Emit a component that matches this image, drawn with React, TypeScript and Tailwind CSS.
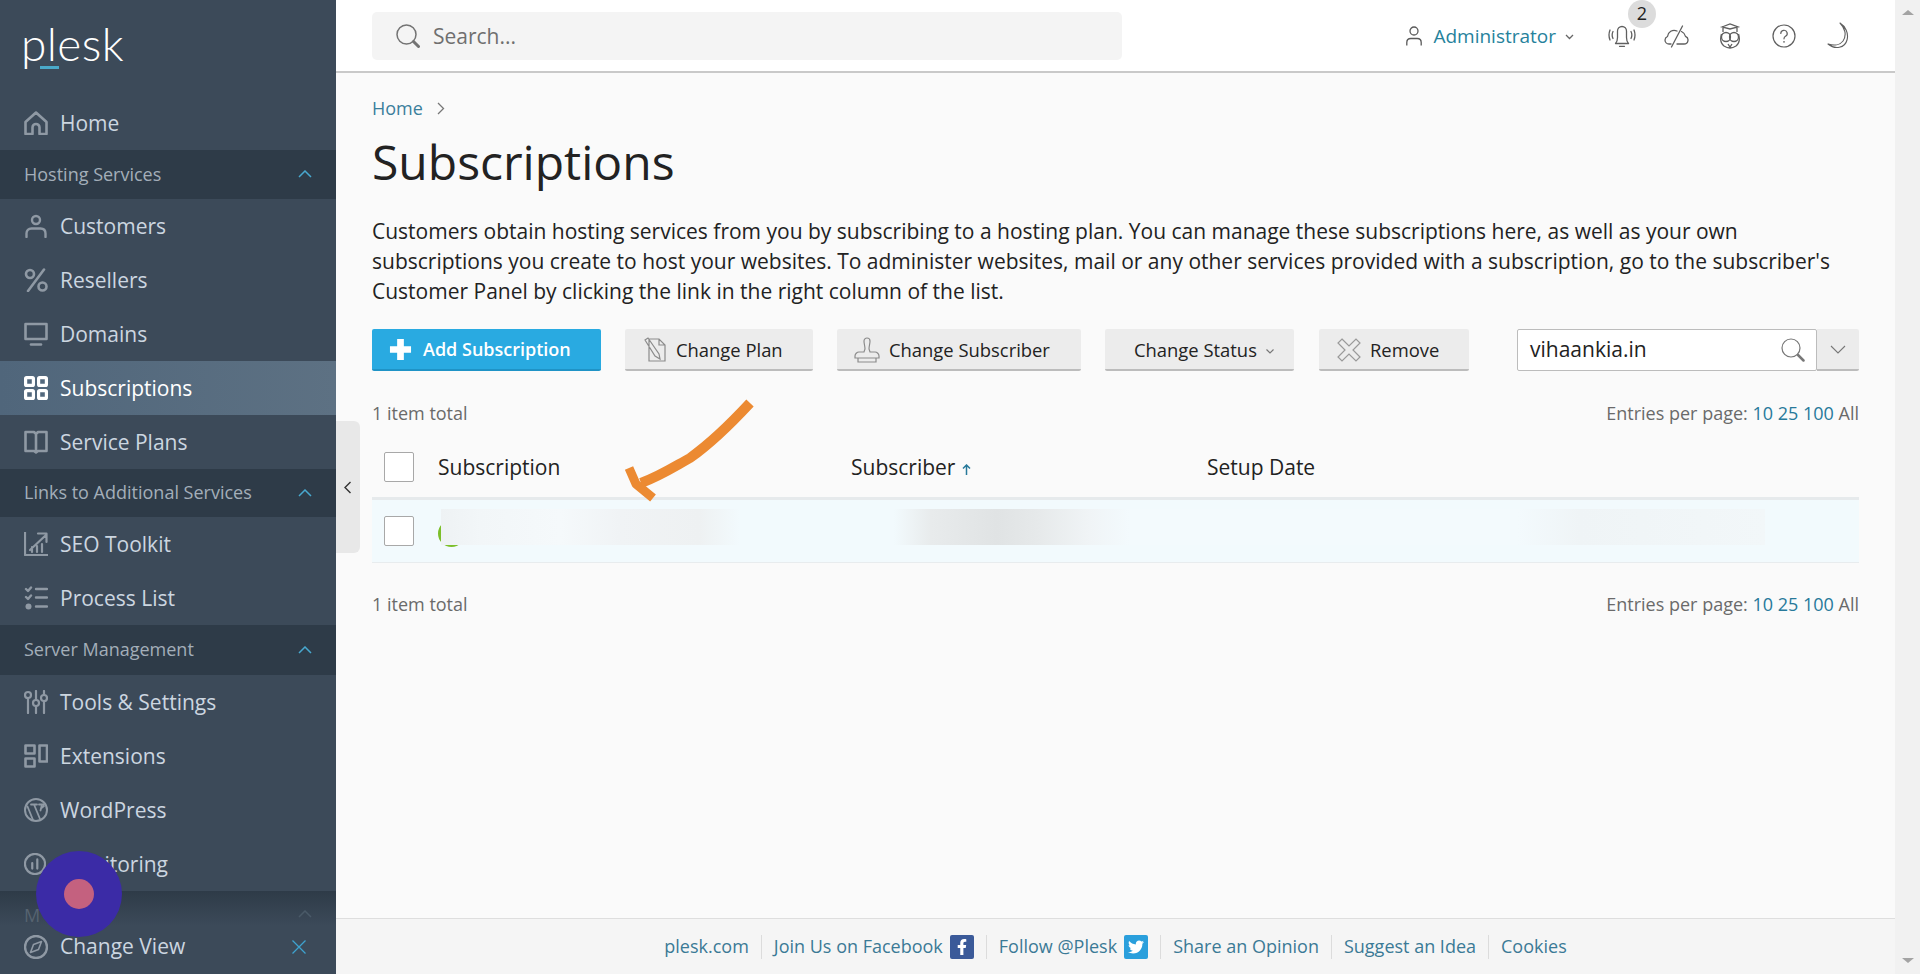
import React from "react";
import { FaFacebookF, FaTwitter } from "react-icons/fa";

type IP = { className?: string };
const S = ({ className, children, size = 24, vb = "0 0 24 24", sw = 2 }: any) => (
  <svg width={size} height={size} viewBox={vb} fill="none" stroke="currentColor" strokeWidth={sw} strokeLinecap="round" strokeLinejoin="round" className={className}>
    {children}
  </svg>
);
const Home = (p: IP) => <S {...p} sw={2.6}><path d="M1.5 23V11L12 1.5 22.5 11v12h-7v-6.5a3.5 3.5 0 0 0-7 0V23z" strokeLinecap="butt" /></S>;
const User = (p: IP) => <S {...p} sw={2.4}><circle cx="12" cy="6" r="4" /><path d="M2.5 23v-3.5c0-3 2-5 5-5h9c3 0 5 2 5 5V23" /></S>;
const Percent = (p: IP) => <S {...p} sw={2.6}><circle cx="6" cy="6" r="4" /><circle cx="18.5" cy="18.5" r="4" /><path d="M20 1.5 4 23" /></S>;
const Monitor = (p: IP) => <S {...p} sw={2.6}><path d="M1.5 2h21v15h-21z" strokeLinecap="butt" /><path d="M7 22.5h10" /></S>;
const Grid = (p: IP) => <S {...p} sw={3.2}><rect x="1.6" y="1.6" width="7.8" height="7.8" rx="1" /><rect x="14.6" y="1.6" width="7.8" height="7.8" rx="1" /><rect x="1.6" y="14.6" width="7.8" height="7.8" rx="1" /><rect x="14.6" y="14.6" width="7.8" height="7.8" rx="1" /></S>;
const Book = (p: IP) => <S {...p} sw={2.6}><path d="M12 4 10 2H1.5v19H10l2 1.5 2-1.5h8.5V2H14zM12 4v18" strokeLinecap="butt" /></S>;
const Seo = (p: IP) => <S {...p} sw={2.2}><path d="M1 0v23h23" strokeLinecap="butt" /><path d="M6 18 22 3M14 1.5h8.5V10M8 15v5M13 14v6M18 12v8" /></S>;
const Proc = (p: IP) => <S {...p} sw={2.4}><path d="m2 3 2 2 3-3.5M2 11l2 2 3-3.5M12 3h11M12 11.5h11M12 20.5h11" /><circle cx="4.5" cy="20.5" r="3" fill="currentColor" stroke="none" /></S>;
const Tools = (p: IP) => <S {...p} sw={2.2}><path d="M4 9v14M12 1v9M12 16v7M20 1v4M20 11v12" /><circle cx="4" cy="5" r="3" /><circle cx="12" cy="13" r="3" /><circle cx="20" cy="8" r="3" /></S>;
const Ext = (p: IP) => <S {...p} sw={2.6}><rect x="1.5" y="1.5" width="9" height="8" /><rect x="1.5" y="14.5" width="9" height="8" /><rect x="15.5" y="1.5" width="7.5" height="16" /></S>;
const Wp = (p: IP) => <S {...p} sw={2}><circle cx="12" cy="12" r="11" /><path d="M3.5 8.5 9 22M7 6.5h6M10 6.5 16 21M15 6.5h5M18 6.5l-1.5 6M17.5 10l2.5-2" strokeWidth="1.8" /></S>;
const Mon = (p: IP) => <S {...p} sw={2.4} size={22}><circle cx="12" cy="12" r="11" /><path d="M9 11v6M14.5 7v10" /></S>;
const Compass = (p: IP) => <S {...p} sw={2.4}><circle cx="12" cy="12" r="11" /><path d="M17.5 6.5 14.5 14.5 6.5 17.5 9.5 9.5z" strokeWidth="1.6" /></S>;

const Item = ({ icon: I, label, active, h = "h-[54px]" }: any) => (
  <div className={`${h} shrink-0 flex items-center pl-6 ${active ? "bg-[linear-gradient(90deg,#50667b,#5d7183)] text-white" : "text-[#ccd6e0]"}`}>
    <span className={`w-9 flex ${active ? "text-white" : "text-[#8f99a4]"}`}><I /></span>
    <span className="text-[21px] leading-none">{label}</span>
  </div>
);

const Up = ({ className = "" }: any) => (
  <svg width="14" height="8" viewBox="0 0 14 8" fill="none" stroke="currentColor" strokeWidth="1.5" className={className}><path d="m1 7 6-6 6 6" /></svg>
);

const Band = ({ label, h = "h-12" }: { label: string; h?: string }) => (
  <div className={`${h} shrink-0 flex items-center justify-between pl-6 pr-6 bg-[#2e3b48]`}>
    <span className="text-[18px] text-[#a3aeb9] -mt-[1px]">{label}</span>
    <Up className="text-[#48a8cf] -mt-[1px]" />
  </div>
);

const Sidebar = () => (
  <aside className="w-[336px] shrink-0 h-full flex flex-col bg-[#3c4a59] overflow-hidden">
    <div className="h-24 pl-[21px] pt-[14px] relative shrink-0">
      <span className="text-[46px] leading-[60px] font-light tracking-[0.4px] text-white font-['Lato']">plesk</span>
      <div className="absolute left-[40px] top-[66px] w-[19px] h-[2.5px] bg-[#4aa9c9]" />
    </div>
    <Item icon={Home} label="Home" />
    <Band label="Hosting Services" h="h-[49px]" />
    <Item icon={User} label="Customers" />
    <Item icon={Percent} label="Resellers" />
    <Item icon={Monitor} label="Domains" />
    <Item icon={Grid} label="Subscriptions" active />
    <Item icon={Book} label="Service Plans" />
    <Band label="Links to Additional Services" />
    <Item icon={Seo} label="SEO Toolkit" />
    <Item icon={Proc} label="Process List" />
    <Band label="Server Management" h="h-[50px]" />
    <Item icon={Tools} label="Tools & Settings" />
    <Item icon={Ext} label="Extensions" />
    <Item icon={Wp} label="WordPress" />
    <Item icon={Mon} label="Monitoring" />
    <div className="h-[35px] shrink-0 bg-[linear-gradient(180deg,#2e3b48,#3c4a59)] flex items-end justify-between pl-6 pr-6 pb-[1px]">
      <span className="text-[18px] leading-[20px] text-[#566370]">M</span>
      <Up className="text-[#4a5a68] mb-[7px]" />
    </div>
    <div className="flex-1 flex items-center pl-6 pr-[30px] pb-[7px] text-[#ccd6e0] bg-[#3c4a59]">
      <span className="w-9 flex text-[#8f99a4]"><Compass /></span>
      <span className="text-[21px] leading-none flex-1">Change View</span>
      <svg width="14" height="14" viewBox="0 0 14 14" stroke="#3ea3cf" strokeWidth="1.3"><path d="m0.5 0.5 13 13M13.5 0.5l-13 13" /></svg>
    </div>
  </aside>
);

const Tb = ({ children, w, gray = true, cls = "" }: any) => (
  <div className={`h-[42px] pt-[1px] flex items-center justify-start rounded-[2px] shrink-0 border-b-2 ${gray ? "bg-[#ececec] border-[#bcbcbc] text-[#222] text-[18.4px] font-medium" : ""} ${w} ${cls}`}>
    {children}
  </div>
);

const Info = () => (
  <div className="h-6 flex items-center justify-between text-[18px] leading-none text-[#6a6a6a]">
    <span>1 item total</span>
    <span>Entries per page: <span className="text-[#27799a]">10 25 100</span> All</span>
  </div>
);

const Check = ({ cls = "" }: any) => <div className={`w-[30px] h-[30px] bg-white border border-[#a8a8a8] rounded-[2px] shrink-0 ${cls}`} />;

const Sep = () => <span className="w-px h-6 bg-[#dcdcdc] mx-[12px]" />;

const Ic = ({ children }: any) => <div className="relative w-[54px] h-7 flex items-center justify-center">{children}</div>;

const Main = () => (
  <main className="flex-1 min-w-0 h-full flex flex-col bg-[#fafafa]">
    <header className="h-[73px] shrink-0 bg-white border-b-2 border-[#c9c9c9] flex items-center pl-9 pr-[30px] justify-between">
      <div className="w-[750px] h-12 mt-[1px] rounded-[5px] bg-[#f4f4f4] flex items-center pl-6 gap-[13px] text-[#6f6f6f]">
        <svg width="24" height="24" viewBox="0 0 24 24" fill="none" stroke="#737373" strokeWidth="1.5" strokeLinecap="round"><circle cx="10.5" cy="10.5" r="9.5" /><path d="m17.500 17.500 5 5" strokeWidth="3" /></svg>
        <span className="text-[21px] mt-[1px]">Search...</span>
      </div>
      <div className="flex items-center">
        <svg width="16" height="20" viewBox="0 0 16 20" fill="none" stroke="#5a5a5a" strokeWidth="1.3" className="mr-[11px]"><circle cx="8" cy="5" r="4" /><path d="M.8 19.500v-3c0-2.500 1.700-4 4-4h6.400c2.300 0 4 1.500 4 4v3" /></svg>
        <span className="text-[19px] font-medium text-[#26829c] leading-none mt-[1px]">Administrator</span>
        <svg width="9" height="6" viewBox="0 0 9 6" fill="none" stroke="#666" strokeWidth="1.300" className="ml-[9px] mr-[21px] mt-[2px]"><path d="m1 1 3.500 3.500L8 1" /></svg>
        <Ic>
          <svg width="28" height="24" viewBox="0 0 28 24" fill="none" stroke="#5f5f5f" strokeWidth="1.300" strokeLinecap="round" strokeLinejoin="round"><path d="M7.500 19.500c1.500-1.500 2-3 2-6V7a4.500 4.500 0 0 1 9 0v6.500c0 3 .500 4.500 2 6zM11.500 22.300h5M5 7.500Q3.300 11 5 14.500M23 7.500q1.700 3.500 0 7M2 6Q0 11 2 16M26 6q2 5 0 10" /></svg>
          <span className="absolute -top-[22px] left-[33px] w-7 h-7 rounded-full bg-[#dcdcdc] text-[18px] text-[#222] flex items-center justify-center">2</span>
        </Ic>
        <Ic>
          <svg width="26" height="24" viewBox="0 0 26 24" fill="none" stroke="#5f5f5f" strokeWidth="1.300" strokeLinecap="round" strokeLinejoin="round"><path d="M8 20H6a4 4 0 0 1-4-4 4 4 0 0 1 2.500-3.500C5 8 9.500 5 14 7M14 20h7a4 4 0 0 0 1.500-7.700C22 10 20.500 8.500 18.500 7.500M19.500 2 8.500 23" /></svg>
        </Ic>
        <Ic>
          <svg width="24" height="28" viewBox="0 0 24 28" fill="none" stroke="#5f5f5f" strokeWidth="1.300"><path d="M4 5 12 2l8 3-8 2zM5 6v4M19 6v4" /><circle cx="8" cy="15" r="4.500" /><circle cx="16" cy="15" r="4.500" /><path d="M3.500 12Q1 20 6 24q6 4 12 0 5-4 2.500-12M10 22l2 3 2-3" /></svg>
        </Ic>
        <Ic>
          <svg width="24" height="24" viewBox="0 0 24 24" fill="none" stroke="#5f5f5f" strokeWidth="1.200" strokeLinecap="round"><circle cx="12" cy="12" r="11" /><path d="M8.800 9.500A3.200 3.200 0 1 1 13.500 12.300c-1 .600-1.500 1.200-1.500 2.500" /><path d="M12 17.800v.200" strokeWidth="1.600" /></svg>
        </Ic>
        <Ic>
          <svg width="22" height="28" viewBox="0 0 22 28" fill="none" stroke="#5f5f5f" strokeWidth="1.100" strokeLinejoin="round"><path d="M13 1c5 5 7 12 3 18-3 4-9 5-15 3 7 6 17 4 19-4 2-7-2-14-7-17z" /></svg>
        </Ic>
      </div>
    </header>

    <div className="flex-1 min-h-0 px-9 overflow-hidden flex flex-col">
      <div className="h-6 mt-[23px] flex items-center text-[18px] leading-none text-[#3a7f9c] gap-[14px]">
        Home
        <svg width="8" height="13" viewBox="0 0 8 13" fill="none" stroke="#777" strokeWidth="1.300"><path d="m1 1 5.500 5.500L1 12" /></svg>
      </div>
      <h1 className="mt-[12px] h-[60px] text-[48px] leading-[60px] text-[#222] font-normal">Subscriptions</h1>
      <p className="mt-[23px] text-[21px] leading-[30px] text-[#222] whitespace-nowrap pt-[1px] -mb-[1px]">
        Customers obtain hosting services from you by subscribing to a hosting plan. You can manage these subscriptions here, as well as your own<br />
        subscriptions you create to host your websites. To administer websites, mail or any other services provided with a subscription, go to the subscriber's<br />
        Customer Panel by clicking the link in the right column of the list.
      </p>
      <div className="mt-6 flex items-center">
        <Tb w="w-[229px] pl-[17px] gap-[11px]" gray={false} cls="bg-[#29aae1] border-[#1f93c6] text-white text-[18px] font-semibold">
          <svg width="23" height="23" viewBox="0 0 24 24" fill="#fff"><path d="M8.500 1h7v7.500H23v7h-7.500V23h-7v-7.500H1v-7h7.500z" /></svg>
          Add Subscription
        </Tb>
        <Tb w="w-[188px] ml-6 pl-[18px] gap-[9px]">
          <svg width="24" height="26" viewBox="0 0 24 26" fill="none" stroke="#8b8b8b" strokeWidth="1.200"><path d="M6 2h10l6 6v16H6zM16 2v6h6M2 3l3-2 11 16 1 5-5-3z" /></svg>
          Change Plan
        </Tb>
        <Tb w="w-[244px] ml-6 pl-[17px] gap-[9px]">
          <svg width="26" height="26" viewBox="0 0 26 26" fill="none" stroke="#8b8b8b" strokeWidth="1.200"><path d="M10 4a3 3 0 0 1 6 0c0 3-1 5-1 8l1 3h5c2 0 4 2 4 4v2H1v-2c0-2 2-4 4-4h5l1-3c0-3-1-5-1-8zM4 21v4h18v-4" /></svg>
          Change Subscriber
        </Tb>
        <Tb w="w-[189px] ml-6 pl-[29px] gap-[9px]">
          Change Status
          <svg width="8" height="5" viewBox="0 0 8 5" fill="none" stroke="#777" strokeWidth="1.200" className="mt-[3px]"><path d="m.5.5 3.500 3.500L7.500.5" /></svg>
        </Tb>
        <Tb w="w-[150px] ml-[25px] pl-[18px] gap-[9px]">
          <svg width="24" height="24" viewBox="0 0 24 24" fill="none" stroke="#9a9a9a" strokeWidth="1.200"><path d="M5 1 12 8l7-7 4 4-7 7 7 7-4 4-7-7-7 7-4-4 7-7-7-7z" /></svg>
          Remove
        </Tb>
        <div className="ml-auto w-[300px] h-[42px] bg-white border border-[#bcbcbc] rounded-[2px] flex items-center justify-between pl-3 pr-[11px] text-[21px] text-[#222] shrink-0">
          vihaankia.in
          <svg width="24" height="24" viewBox="0 0 24 24" fill="none" stroke="#777" strokeWidth="1.200" strokeLinecap="round"><circle cx="10" cy="10" r="9" /><path d="m17 17 5.500 5.500" strokeWidth="2.500" /></svg>
        </div>
        <div className="w-[42px] h-[42px] bg-[#ececec] border-b-2 border-[#bcbcbc] rounded-r-[2px] flex items-center justify-center shrink-0">
          <svg width="16" height="9" viewBox="0 0 16 9" fill="none" stroke="#777" strokeWidth="1.100"><path d="m1 1 7 7 7-7" /></svg>
        </div>
      </div>
      <div className="mt-[30px]"><Info /></div>
      <div className="mt-3 h-[63px] shrink-0 flex items-center pl-3 text-[21px] text-[#222] border-b-[3px] border-[#e6eaec]">
        <Check cls="-mt-[1px]" />
        <span className="w-[437px] pl-6 shrink-0 mt-[1px]">Subscription</span>
        <span className="w-[356px] shrink-0 flex items-center gap-[7px] mt-[1px]">
          Subscriber
          <svg width="9" height="11" viewBox="0 0 9 11" fill="none" stroke="#27799a" strokeWidth="1.500" className="mt-[3px]"><path d="M4.500 11V1M1 4.500 4.500 1 8 4.500" /></svg>
        </span>
        <span className="mt-[1px]">Setup Date</span>
      </div>
      <div className="h-[63px] shrink-0 flex items-center pl-3 bg-[#f2fafd] border-b border-[#e8ecee] relative">
        <Check cls="-mt-[1px]" />
        <div className="ml-[24px] w-[27px] h-[27px] mt-[5px] rounded-full border-[3px] border-[#7cbf2a] shrink-0" />
        <div className="absolute left-[69px] top-[9px] w-[1324px] h-9 bg-[linear-gradient(90deg,#eef2f4,#f2f6f8_3%,#f5f9fb_9%,#f0f3f5_13.5%,#eef1f2_19.5%,#f2fafd_22.6%,#f2fafd_34.2%,#e8ebec_37%,#e0e3e4_42%,#e6e9ea_45%,#f0f4f6_49%,#f3fafd_52%,#f3fafd_81.3%,#eff4f6_86%,#f2f7f9)]" />
      </div>
      <div className="mt-[29px]"><Info /></div>
    </div>

    <footer className="h-[56px] shrink-0 bg-[#f5f5f5] border-t border-[#dedede] flex items-center justify-center text-[18px] text-[#3b7a96]">
      <span>plesk.com</span><Sep />
      <span>Join Us on Facebook</span>
      <span className="ml-[7px] w-6 h-6 rounded-[2px] bg-[#3b5a99] flex items-center justify-center text-white text-[16px]"><FaFacebookF /></span>
      <Sep />
      <span>Follow @Plesk</span>
      <span className="ml-[7px] w-6 h-6 rounded-[2px] bg-[#2a9fdc] flex items-center justify-center text-white text-[16px]"><FaTwitter /></span>
      <Sep />
      <span>Share an Opinion</span><Sep />
      <span>Suggest an Idea</span><Sep />
      <span>Cookies</span>
    </footer>
  </main>
);

export default function App() {
  return (
    <div className="relative w-full h-[974px] flex overflow-hidden font-['Open_Sans',sans-serif]">
      <Sidebar />
      <Main />
      <div className="w-[25px] shrink-0 h-full bg-[#f1f1f1] flex flex-col items-center justify-between py-[10px]">
        <svg width="12" height="5" viewBox="0 0 12 5" fill="#a3a3a3"><path d="M6 0l6 5H0z" /></svg>
        <svg width="12" height="5" viewBox="0 0 12 5" fill="#a3a3a3" className="mb-[1px]"><path d="M6 5l6-5H0z" /></svg>
      </div>
      <div className="absolute left-[336px] top-[421px] w-6 h-[132px] bg-[#e8e8e8] rounded-r-md flex items-center justify-center">
        <svg width="8" height="13" viewBox="0 0 8 13" fill="none" stroke="#333" strokeWidth="1.400"><path d="M6.500 1 1 6.500 6.500 12" /></svg>
      </div>
      <div className="absolute left-[36px] top-[851px] w-[86px] h-[86px] rounded-full bg-[#3b2ba6] flex items-center justify-center">
        <div className="w-[30px] h-[30px] rounded-full bg-[#c4617f]" />
      </div>
      <svg className="absolute left-[620px] top-[395px]" width="140" height="110" viewBox="620 395 140 110" fill="none" stroke="#ec8a32" strokeLinejoin="round">
        <path d="M750 403C725 430 704 448 690 458 672 468 660 476 641 483" strokeWidth="10" />
        <path d="M629 468 636 484 653 498" strokeWidth="9" />
      </svg>
    </div>
  );
}
